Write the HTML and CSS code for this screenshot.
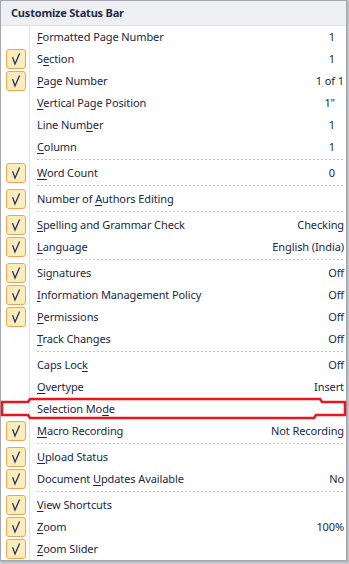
FILE: index.html
```html
<!DOCTYPE html>
<html>
<head>
<meta charset="utf-8">
<link rel="stylesheet" href="styles.css">
</head>
<body>
<div class="menu">
  <div class="header">Customize Status Bar</div>
  <div class="items">
    <div class="row"><span class="gut"></span><span class="label"><u>F</u>ormatted Page Number</span><span class="val num">1</span></div>
    <div class="row on"><span class="gut"><span class="box"><svg viewBox="0 0 20 20"><path d="M6.6 8.2 L9 15 L13.6 4.4"/></svg></span></span><span class="label">S<u>e</u>ction</span><span class="val num">1</span></div>
    <div class="row on"><span class="gut"><span class="box"><svg viewBox="0 0 20 20"><path d="M6.6 8.2 L9 15 L13.6 4.4"/></svg></span></span><span class="label"><u>P</u>age Number</span><span class="val">1 of 1</span></div>
    <div class="row"><span class="gut"></span><span class="label"><u>V</u>ertical Page Position</span><span class="val num">1"</span></div>
    <div class="row"><span class="gut"></span><span class="label">Line Num<u>b</u>er</span><span class="val num">1</span></div>
    <div class="row"><span class="gut"></span><span class="label"><u>C</u>olumn</span><span class="val num">1</span></div>
    <div class="sep"></div>
    <div class="row on"><span class="gut"><span class="box"><svg viewBox="0 0 20 20"><path d="M6.6 8.2 L9 15 L13.6 4.4"/></svg></span></span><span class="label"><u>W</u>ord Count</span><span class="val num">0</span></div>
    <div class="sep"></div>
    <div class="row on"><span class="gut"><span class="box"><svg viewBox="0 0 20 20"><path d="M6.6 8.2 L9 15 L13.6 4.4"/></svg></span></span><span class="label">Number of <u>A</u>uthors Editing</span><span class="val"></span></div>
    <div class="sep"></div>
    <div class="row on"><span class="gut"><span class="box"><svg viewBox="0 0 20 20"><path d="M6.6 8.2 L9 15 L13.6 4.4"/></svg></span></span><span class="label"><u>S</u>pelling and Grammar Check</span><span class="val">Checking</span></div>
    <div class="row on"><span class="gut"><span class="box"><svg viewBox="0 0 20 20"><path d="M6.6 8.2 L9 15 L13.6 4.4"/></svg></span></span><span class="label"><u>L</u>anguage</span><span class="val">English (India)</span></div>
    <div class="sep"></div>
    <div class="row on"><span class="gut"><span class="box"><svg viewBox="0 0 20 20"><path d="M6.6 8.2 L9 15 L13.6 4.4"/></svg></span></span><span class="label">Si<u>g</u>natures</span><span class="val">Off</span></div>
    <div class="row on"><span class="gut"><span class="box"><svg viewBox="0 0 20 20"><path d="M6.6 8.2 L9 15 L13.6 4.4"/></svg></span></span><span class="label"><u>I</u>nformation Management Policy</span><span class="val">Off</span></div>
    <div class="row on"><span class="gut"><span class="box"><svg viewBox="0 0 20 20"><path d="M6.6 8.2 L9 15 L13.6 4.4"/></svg></span></span><span class="label"><u>P</u>ermissions</span><span class="val">Off</span></div>
    <div class="row"><span class="gut"></span><span class="label"><u>T</u>rack Changes</span><span class="val">Off</span></div>
    <div class="sep"></div>
    <div class="row"><span class="gut"></span><span class="label">Caps Loc<u>k</u></span><span class="val">Off</span></div>
    <div class="row"><span class="gut"></span><span class="label"><u>O</u>vertype</span><span class="val">Insert</span></div>
    <div class="row"><span class="gut"></span><span class="label">Selection Mo<u>d</u>e</span><span class="val"></span></div>
    <div class="row on"><span class="gut"><span class="box"><svg viewBox="0 0 20 20"><path d="M6.6 8.2 L9 15 L13.6 4.4"/></svg></span></span><span class="label"><u>M</u>acro Recording</span><span class="val">Not Recording</span></div>
    <div class="sep"></div>
    <div class="row on"><span class="gut"><span class="box"><svg viewBox="0 0 20 20"><path d="M6.6 8.2 L9 15 L13.6 4.4"/></svg></span></span><span class="label"><u>U</u>pload Status</span><span class="val"></span></div>
    <div class="row on"><span class="gut"><span class="box"><svg viewBox="0 0 20 20"><path d="M6.6 8.2 L9 15 L13.6 4.4"/></svg></span></span><span class="label">Document <u>U</u>pdates Available</span><span class="val">No</span></div>
    <div class="sep"></div>
    <div class="row on"><span class="gut"><span class="box"><svg viewBox="0 0 20 20"><path d="M6.6 8.2 L9 15 L13.6 4.4"/></svg></span></span><span class="label"><u>V</u>iew Shortcuts</span><span class="val"></span></div>
    <div class="row on"><span class="gut"><span class="box"><svg viewBox="0 0 20 20"><path d="M6.6 8.2 L9 15 L13.6 4.4"/></svg></span></span><span class="label"><u>Z</u>oom</span><span class="val">100%</span></div>
    <div class="row on"><span class="gut"><span class="box"><svg viewBox="0 0 20 20"><path d="M6.6 8.2 L9 15 L13.6 4.4"/></svg></span></span><span class="label"><u>Z</u>oom Slider</span><span class="val"></span></div>
  </div>
  <svg class="mark" viewBox="0 0 349 30" width="349" height="30">
    <path d="M2 5 L28 5 L30 2 L320 2 L322 5 L345 5 L345 18 L316 18 L314 21 L30 21 L28 18 L2 18 Z"/>
  </svg>
</div>
</body>
</html>
```

FILE: styles.css
```css
html, body {
  margin: 0;
  padding: 0;
}
body {
  width: 349px;
  height: 564px;
  background: #c9ccd1;
  font-family: "Noto Sans", Lato, sans-serif;
  font-size: 11px;
  letter-spacing: -0.1px;
  color: #1a2745;
  overflow: hidden;
}
.menu {
  position: relative;
  width: 345px;
  height: 559px;
  border: 1px solid #a4a8ae;
  background: #ffffff;
  box-shadow: 1px 1px 0 #b0b4ba, 2px 2px 0 #c2c5ca;
}
.header {
  box-sizing: border-box;
  height: 25px;
  padding-left: 10px;
  padding-bottom: 1px;
  display: flex;
  align-items: center;
  background: #eef0f3;
  border-bottom: 1px solid #dcdfe4;
  font-weight: bold;
  letter-spacing: -0.2px;
  color: #1e2c4a;
}
.items {
  background: linear-gradient(to right, #ffffff 0, #ffffff 28px, #e2e3e6 28px, #e2e3e6 29px, #ffffff 29px);
}
.row {
  height: 22px;
  display: flex;
  align-items: center;
}
.gut {
  width: 28px;
  height: 22px;
  flex: none;
  display: flex;
  align-items: center;
}
.box {
  margin-left: 5px;
  width: 20px;
  height: 20px;
  box-sizing: border-box;
  border: 1px solid #f1a456;
  border-radius: 3px;
  background: #fdedbb;
  display: block;
  position: relative;
}
.box svg {
  position: absolute;
  left: -1px;
  top: -1px;
  width: 20px;
  height: 20px;
}
.box path {
  fill: none;
  stroke: #26336c;
  stroke-width: 1.3;
  stroke-linejoin: miter;
}
.label {
  flex: 1;
  padding-left: 8px;
  padding-bottom: 2px;
  white-space: nowrap;
}
.label u {
  text-decoration-thickness: 1px;
  text-underline-offset: 2px;
}
.val {
  padding-right: 2px;
  padding-bottom: 2px;
  white-space: nowrap;
}
.val.num {
  padding-right: 11px;
}
.sep {
  height: 4px;
  margin-left: 36px;
  margin-right: 2px;
  background: repeating-linear-gradient(to right, #c4c6c9 0, #c4c6c9 2px, transparent 2px, transparent 4px) 0 1px / 100% 1px no-repeat;
}
.mark {
  position: absolute;
  left: -1px;
  top: 396px;
}
.mark path {
  fill: none;
  stroke: #e8161f;
  stroke-width: 2.5;
}
```
